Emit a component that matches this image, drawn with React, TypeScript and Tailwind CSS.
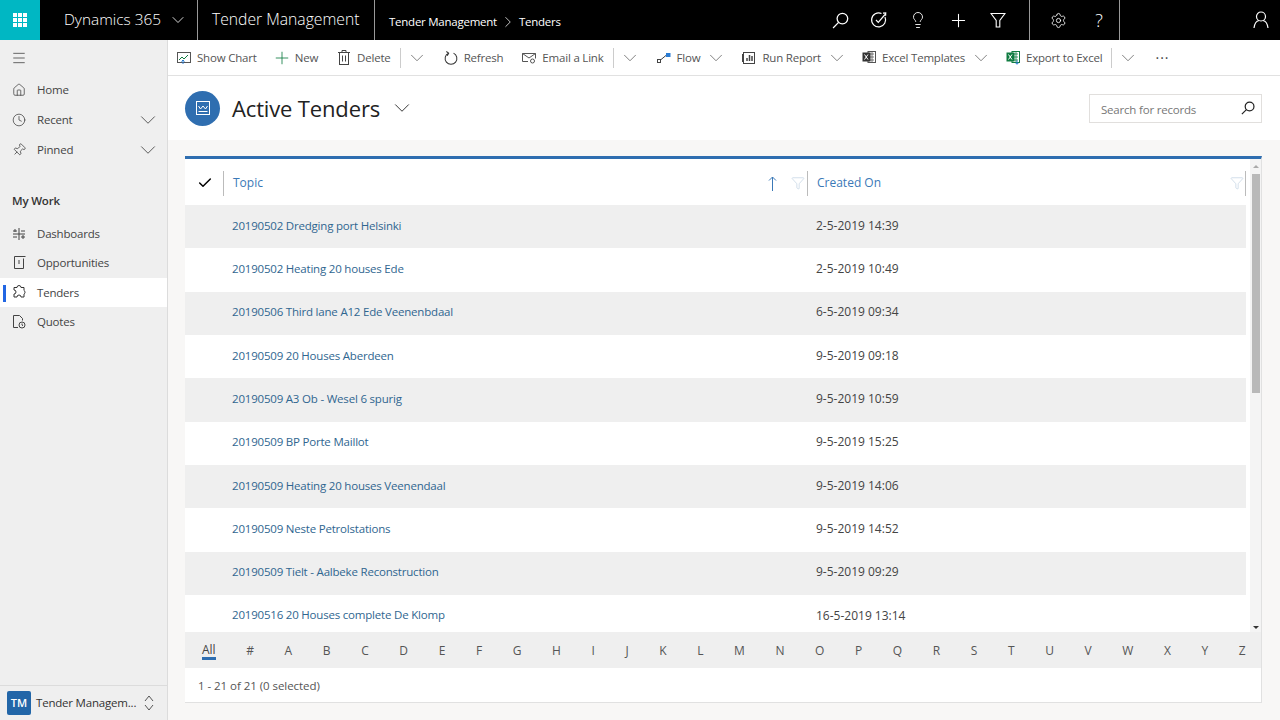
import { ChevronDown, ChevronRight, Plus, Lightbulb, Settings, Home, Clock, Pin, Menu, Funnel, Check } from "lucide-react";
import type { ReactNode } from "react";

const rows = [
  ["20190502 Dredging port Helsinki", "2-5-2019 14:39"],
  ["20190502 Heating 20 houses Ede", "2-5-2019 10:49"],
  ["20190506 Third lane A12 Ede Veenenbdaal", "6-5-2019 09:34"],
  ["20190509 20 Houses Aberdeen", "9-5-2019 09:18"],
  ["20190509 A3 Ob - Wesel 6 spurig", "9-5-2019 10:59"],
  ["20190509 BP Porte Maillot", "9-5-2019 15:25"],
  ["20190509 Heating 20 houses Veenendaal", "9-5-2019 14:06"],
  ["20190509 Neste Petrolstations", "9-5-2019 14:52"],
  ["20190509 Tielt - Aalbeke Reconstruction", "9-5-2019 09:29"],
  ["20190516 20 Houses complete De Klomp", "16-5-2019 13:14"],
];

const letters = "#ABCDEFGHIJKLMNOPQRSTUVWXYZ".split("");

function SearchGlyph({ size, color, width }: { size: number; color: string; width: number }) {
  return (
    <svg width={size} height={size} viewBox="0 0 16 16" fill="none" stroke={color} strokeWidth={width}>
      <circle cx="9.800" cy="6.200" r="5" />
      <path d="M6.200 9.800L1 15" />
    </svg>
  );
}

function Chev({ className = "" }: { className?: string }) {
  return <ChevronDown size={22} strokeWidth={0.8} className={"-mr-[3px] text-[#555] " + className} />;
}

function Cmd({ icon, label, className = "" }: { icon: ReactNode; label: string; className?: string }) {
  return (
    <div className={"flex items-center gap-[6px] whitespace-nowrap " + className}>
      <span className="flex w-[14px] justify-center">{icon}</span>
      <span>{label}</span>
    </div>
  );
}

function NavItem({ icon, label, chevron, active, compact }: { icon: ReactNode; label: string; chevron?: boolean; active?: boolean; compact?: boolean }) {
  return (
    <div className={"relative flex items-center pl-[12px] pr-[6px] " + (compact ? "h-[29.33px] " : "h-[30px] ") + (active ? "bg-white" : "")}>
      {active && <div className="absolute left-[3px] top-[7px] h-[17px] w-[3px] bg-[#2266e3]" />}
      <span className="flex w-[14px] justify-center text-[#333]">{icon}</span>
      <span className="ml-[11px] flex-1 text-[#444]">{label}</span>
      {chevron && <ChevronDown size={26} strokeWidth={0.8} className="-my-[6px] text-[#444]" />}
    </div>
  );
}

function ExcelIcon({ green }: { green?: boolean }) {
  return (
    <svg width="14" height="15" viewBox="0 0 14 15">
      <rect x="6" y="1.500" width="7.500" height="11" fill="none" stroke={green ? "#107c41" : "#555"} />
      <path d="M8 4h4M8 7h4M8 10h4M10 2v10" stroke={green ? "#107c41" : "#555"} strokeWidth="0.800" />
      <rect x="0.500" y="2.500" width="8" height="9" fill={green ? "#107c41" : "#333"} />
      <path d="M2.500 4.500l3.500 5M6 4.500l-3.500 5" stroke="#fff" strokeWidth="1" />
      {green && <path d="M11 10.500v3.500M9.500 12.800l1.500 1.500 1.500-1.500" stroke="#2b7cd3" fill="none" />}
    </svg>
  );
}

export default function App() {
  return (
    <div className="flex h-[720px] w-[1280px] flex-col overflow-hidden bg-[#f8f7f6] font-['Open_Sans','Noto_Sans',sans-serif] text-[12px] text-[#444]">
      {/* top bar */}
      <header className="flex h-[40px] shrink-0 items-center bg-black text-white">
        <div className="grid h-full w-[40px] place-items-center bg-[#00b7c3]">
          <svg width="14" height="14" viewBox="0 0 14 14" fill="#fff">
            <rect x="0" y="0" width="4" height="4" /><rect x="5" y="0" width="4" height="4" /><rect x="10" y="0" width="4" height="4" />
            <rect x="0" y="5" width="4" height="4" /><rect x="5" y="5" width="4" height="4" /><rect x="10" y="5" width="4" height="4" />
            <rect x="0" y="10" width="4" height="4" /><rect x="5" y="10" width="4" height="4" /><rect x="10" y="10" width="4" height="4" />
          </svg>
        </div>
        <div className="flex h-full w-[158px] items-center border-r border-[#999] pl-[24px]">
          <span className="text-[15.4px] font-light">Dynamics 365</span>
          <ChevronDown size={20} strokeWidth={1} className="ml-[7px]" />
        </div>
        <div className="flex h-full w-[177px] items-center border-r border-[#999] pl-[14px] text-[15.7px] font-light">Tender Management</div>
        <div className="flex items-center pl-[14px] pt-[3px] text-[11.5px] tracking-[-0.25px]">
          <span>Tender Management</span>
          <ChevronRight size={18} strokeWidth={1} className="mx-[2px]" />
          <span>Tenders</span>
        </div>
        <div className="ml-auto flex h-full items-center">
          <div className="flex h-full items-center gap-[21px] border-r border-[#999] pr-[23px]">
            <SearchGlyph size={17} color="#fff" width={1.200} />
            <svg width="18" height="18" viewBox="0 0 18 18" fill="none" stroke="#fff" strokeWidth="1.200">
              <path d="M15 6a7 7 0 1 1-3.500-3.500" />
              <path d="M6 9l2.300 2.300L15 3.500M13 2.200l2.700-.2-.1 2.700" />
            </svg>
            <Lightbulb size={18} strokeWidth={1.200} />
            <Plus size={21} strokeWidth={1.200} />
            <svg width="16" height="16" viewBox="0 0 16 16" fill="none" stroke="#fff" strokeWidth="1.100">
              <path d="M1 1.500h14L9.800 8.500v6.500H6.200V8.500z" />
            </svg>
          </div>
          <div className="flex h-full w-[90px] items-center justify-center gap-[28px] border-r border-[#999] pl-[4px]">
            <Settings size={17} strokeWidth={1.200} />
            <span className="text-[18px] font-light">?</span>
          </div>
          <div className="flex w-[160px] justify-end pr-[11px]">
            <svg width="16" height="18" viewBox="0 0 16 18" fill="none" stroke="#fff" strokeWidth="1.200">
              <circle cx="8" cy="5.500" r="4.500" />
              <path d="M1 17c.5-4 2.500-7 5-7.500M15 17c-.5-4-2.500-7-5-7.500" />
            </svg>
          </div>
        </div>
      </header>

      <div className="flex min-h-0 flex-1">
        {/* sidebar */}
        <aside className="flex w-[168px] shrink-0 flex-col border-r border-[#dcdcdc] bg-[#efefef] text-[11.5px] tracking-[-0.2px]">
          <div className="flex h-[36px] items-center pl-[11px]">
            <Menu size={16} strokeWidth={1.100} className="text-[#333]" />
          </div>
          <div className="-mt-[1px]">
            <NavItem icon={<Home size={14} strokeWidth={1.200} />} label="Home" />
            <NavItem icon={<Clock size={14} strokeWidth={1.200} />} label="Recent" chevron />
            <NavItem icon={<Pin size={14} strokeWidth={1.200} className="rotate-45" />} label="Pinned" chevron />
          </div>
          <div className="mt-[21px] h-[30px] pl-[12px] font-semibold leading-[30px] text-[#333]">My Work</div>
          <div className="mt-[3px]">
            <NavItem
              compact
              icon={
                <svg width="14" height="14" viewBox="0 0 14 14" fill="none" stroke="#444">
                  <path d="M7 1v12M1 4h4M9 4h4M1 7h12M1 10h4M9 10h4M3 2v3M11 8v4" strokeWidth="1" />
                </svg>
              }
              label="Dashboards"
            />
            <NavItem
              compact
              icon={
                <svg width="14" height="15" viewBox="0 0 14 15" fill="none" stroke="#444">
                  <path d="M11.500 3.500v10h-9v-12h11" />
                  <path d="M7 5v4" />
                </svg>
              }
              label="Opportunities"
            />
            <NavItem
              compact
              active
              icon={
                <svg width="14" height="14" viewBox="0 0 14 14" fill="none" stroke="#333">
                  <path d="M5 2.500a2 2 0 0 1 4 0h3v3a2 2 0 0 1 0 3.500v3H9a2 2 0 0 0-4 0H2V9a2 2 0 0 0 0-4V2.500z" />
                </svg>
              }
              label="Tenders"
            />
            <NavItem
              compact
              icon={
                <svg width="14" height="15" viewBox="0 0 14 15" fill="none" stroke="#444">
                  <path d="M6 13.500H1.500v-12h6l3 3v2" />
                  <circle cx="10" cy="11" r="3" />
                  <path d="M10 9.500V11l1 .800" />
                </svg>
              }
              label="Quotes"
            />
          </div>
          <div className="mt-auto flex h-[35px] items-center border-t border-[#dcdcdc] pl-[7px]">
            <div className="grid h-[24px] w-[24px] place-items-center rounded-[2px] bg-[#2266a8] text-[11px] font-semibold tracking-normal text-white">TM</div>
            <span className="ml-[5px] w-[108px] whitespace-nowrap font-medium text-[#333]">Tender Managem...</span>
            <svg width="10" height="16" viewBox="0 0 10 16" fill="none" stroke="#444" strokeWidth="0.900">
              <path d="M1 6l4-5 4 5M1 10l4 5 4-5" />
            </svg>
          </div>
        </aside>

        <main className="flex min-w-0 flex-1 flex-col">
          {/* command bar */}
          <div className="flex h-[36px] shrink-0 items-center border-b border-[#e1e1e1] bg-white pl-[9px] text-[11.5px] tracking-[-0.2px] text-[#555]">
            <Cmd
              label="Show Chart"
              icon={
                <svg width="14" height="14" viewBox="0 0 14 14" fill="none">
                  <rect x="0.500" y="1.500" width="13" height="10" stroke="#555" />
                  <path d="M2 9l3-3 2 2 4-4" stroke="#107c41" />
                  <path d="M6 13V9M4.500 10.500L6 9l1.500 1.500" stroke="#2b7cd3" />
                </svg>
              }
            />
            <Cmd label="New" className="ml-[18px]" icon={<Plus size={20} strokeWidth={1} className="-mx-[3px] text-[#107c41]" />} />
            <Cmd
              label="Delete"
              className="ml-[19px]"
              icon={
                <svg width="12" height="15" viewBox="0 0 12 15" fill="none" stroke="#444">
                  <rect x="1.500" y="2.500" width="9" height="12" />
                  <path d="M4 2.500v-2h4v2M0 2.500h12M4.500 5.500v6M7.500 5.500v6" />
                </svg>
              }
            />
            <div className="ml-[9px] h-[20px] w-px bg-[#ccc]" />
            <Chev className="ml-[5px]" />
            <Cmd
              label="Refresh"
              className="ml-[19px]"
              icon={
                <svg width="15" height="16" viewBox="0 0 15 16" fill="none" stroke="#333" strokeWidth="1.100">
                  <path d="M4.800 2.800a6.300 6.300 0 1 0 5.400 0M2.500 1l2.500 1.800-1.500 2.700" />
                </svg>
              }
            />
            <Cmd
              label="Email a Link"
              className="ml-[19px]"
              icon={
                <svg width="14" height="13" viewBox="0 0 14 13" fill="none" stroke="#555">
                  <path d="M6 10.500H.500v-8h13v5M.500 2.500L7 7l6.500-4.500" />
                  <circle cx="10.500" cy="10" r="2" />
                </svg>
              }
            />
            <div className="ml-[9px] h-[20px] w-px bg-[#ccc]" />
            <Chev className="ml-[5px]" />
            <Cmd
              label="Flow"
              className="ml-[19px]"
              icon={
                <svg width="14" height="10" viewBox="0 0 14 10" fill="none" stroke="#444">
                  <rect x="0.500" y="6.500" width="3" height="3" />
                  <path d="M3.500 7l6-5" />
                  <rect x="9.500" y="0.500" width="3.500" height="3" fill="#2b7cd3" stroke="#2b7cd3" />
                </svg>
              }
            />
            <Chev className="ml-[5px]" />
            <Cmd
              label="Run Report"
              className="ml-[18px]"
              icon={
                <svg width="14" height="14" viewBox="0 0 14 14" fill="none" stroke="#444">
                  <rect x="1.500" y="1.500" width="11" height="11" />
                  <path d="M0.500 3v8M5 10V7M7.500 10V4M10 10V5" strokeWidth="1.500" />
                </svg>
              }
            />
            <Chev className="ml-[5px]" />
            <Cmd label="Excel Templates" className="ml-[17px]" icon={<ExcelIcon />} />
            <Chev className="ml-[5px]" />
            <Cmd label="Export to Excel" className="ml-[17px]" icon={<ExcelIcon green />} />
            <div className="ml-[9px] h-[20px] w-px bg-[#ccc]" />
            <Chev className="ml-[5px]" />
            <span className="ml-[19px] text-[14px] leading-none tracking-[1px] text-[#444]">···</span>
          </div>

          {/* title row */}
          <div className="flex h-[64px] shrink-0 items-center bg-white pl-[17px] pr-[18px]">
            <div className="grid h-[35px] w-[35px] place-items-center rounded-full bg-[#2f6eb0]">
              <svg width="14" height="14" viewBox="0 0 14 14" fill="none" stroke="#fff">
                <rect x="0.500" y="0.500" width="13" height="13" />
                <path d="M2.500 5l2 3 2.500-3 2.500 3 2-3M2.500 10.500h9" />
              </svg>
            </div>
            <h1 className="ml-[12px] text-[22px] tracking-[-0.15px] text-[#222]">Active Tenders</h1>
            <ChevronDown size={26} strokeWidth={0.9} className="ml-[9px] text-[#333]" />
            <div className="ml-auto flex h-[29px] w-[173px] items-center justify-between border border-[#e1dfdd] pl-[11px] pr-[6px] text-[11.5px] tracking-[-0.2px] text-[#777]">
              <span className="pt-[3px]">Search for records</span>
              <SearchGlyph size={14} color="#222" width={1.400} />
            </div>
          </div>

          {/* grid card */}
          <section className="mb-[17px] ml-[17px] mr-[18px] mt-[16px] flex min-h-0 flex-1 flex-col border-b border-r border-[#e1e1e1] border-t-[3px] border-t-[#2f6eb0] bg-white">
            <div className="flex min-h-0 flex-1">
              <div className="min-w-0 flex-1">
                <div className="flex h-[46px] items-center pt-[2px] text-[#3b79b7]">
                  <div className="flex w-[38px] items-center justify-center pl-[1px]">
                    <Check size={16} strokeWidth={2.200} className="text-black" />
                  </div>
                  <div className="flex h-[25px] w-[584px] items-center border-l border-[#bbb] pl-[9px]">
                    <span className="flex-1">Topic</span>
                    <svg width="9" height="15" viewBox="0 0 9 15" fill="none" stroke="#3b79b7" className="mr-[14px]">
                      <path d="M4.500 15V1M1 4.500L4.500 1 8 4.500" />
                    </svg>
                    <Funnel size={14} strokeWidth={1} className="mr-[2px] text-[#b5c9dc]" />
                  </div>
                  <div className="flex h-[25px] flex-1 items-center border-x border-[#bbb] pl-[9px] pr-[1px]">
                    <span className="flex-1">Created On</span>
                    <Funnel size={14} strokeWidth={1} className="text-[#b5c9dc]" />
                  </div>
                </div>
                <div className="h-[427px] overflow-hidden">
                  {rows.map((r, i) => (
                    <div key={r[0]} className={"flex h-[43.33px] items-center " + (i % 2 === 0 ? "bg-[#efefef]" : "bg-white")}>
                      <div className="w-[47px] shrink-0" />
                      <div className="w-[584px] shrink-0 pb-[3px] text-[11.5px] tracking-[-0.2px] text-[#2f6690]">{r[0]}</div>
                      <div className="pb-[2px] text-[#444]">{r[1]}</div>
                    </div>
                  ))}
                </div>
              </div>
              <div className="relative ml-[4px] w-[11px] shrink-0 bg-[#f4f4f4] pl-[2px] pt-[15px]">
                <div className="h-[219px] w-[8px] bg-[#b9b9b9]" />
                <div className="absolute bottom-[3px] left-[3px] h-0 w-0 border-x-[3px] border-t-[3px] border-x-transparent border-t-[#333]" />
                <div className="absolute left-[3px] top-[6px] h-0 w-0 border-x-[3px] border-b-[3px] border-x-transparent border-b-[#aaa]" />
              </div>
            </div>
            <div className="flex h-[36px] shrink-0 items-center gap-[30.600px] bg-[#efefef] pl-[17px] pt-[1px] text-[#555]">
              <span className="border-b-[3px] border-[#2f6eb0] leading-[15px] text-[#444]">All</span>
              {letters.map((l) => (
                <span key={l}>{l}</span>
              ))}
            </div>
            <div className="flex h-[34px] shrink-0 items-center pl-[13px] pt-[1px] text-[11.5px] tracking-[-0.05px] text-[#555]">1 - 21 of 21 (0 selected)</div>
          </section>
        </main>
      </div>
    </div>
  );
}
